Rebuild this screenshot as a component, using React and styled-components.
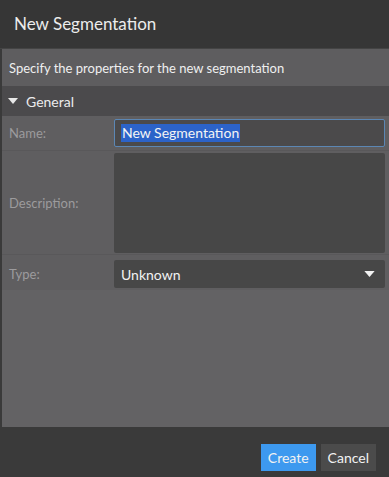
import React from 'react'
import styled, { createGlobalStyle } from 'styled-components'

const GlobalStyle = createGlobalStyle`
html, body {
margin: 0;
padding: 0;
background: #373737;
}
body {
font-family: Lato, "Open Sans", sans-serif;
}
`

function App() {
    return (
        <Dialog>
            <GlobalStyle />
            <Header>New Segmentation</Header>
            <Body>
                <Subtitle>Specify the properties for the new segmentation</Subtitle>
                <Section>
                    <Caret viewBox="0 0 10 6">
                        <path d="M0 0 L10 0 L5 6 Z" fill="#e8e8e8" />
                    </Caret>
                    General
                </Section>
                <Row height={35}>
                    <Label>Name:</Label>
                    <NameInput>
                        <Selected>New Segmentation</Selected>
                    </NameInput>
                </Row>
                <Row height={104}>
                    <Label>Description:</Label>
                    <TextArea />
                </Row>
                <Row height={35} last>
                    <Label>Type:</Label>
                    <Select>
                        Unknown
                        <SelectCaret viewBox="0 0 12 7">
                            <path d="M0 0 L12 0 L6 7 Z" fill="#f2f2f2" />
                        </SelectCaret>
                    </Select>
                </Row>
                <Filler />
            </Body>
            <Footer>
                <Button primary>Create</Button>
                <Button>Cancel</Button>
            </Footer>
        </Dialog>
    )
}

export default App

const Dialog = styled.div`
width: 389px;
height: 477px;
display: flex;
flex-direction: column;
background: #373737;
overflow: hidden;
`

const Header = styled.div`
height: 49px;
flex-shrink: 0;
display: flex;
align-items: center;
padding-left: 14px;
padding-bottom: 1px;
box-sizing: border-box;
font-size: 17px;
color: #ececec;
background: #363636;
border-bottom: 1px solid #444;
`

const Body = styled.div`
flex: 1;
display: flex;
flex-direction: column;
background: #636264;
border-left: 2px solid #3a3a3a;
`

const Subtitle = styled.div`
height: 37px;
flex-shrink: 0;
display: flex;
align-items: center;
padding-left: 7px;
font-size: 13px;
color: #efefef;
background: #5e5d5f;
`

const Section = styled.div`
height: 30px;
flex-shrink: 0;
display: flex;
align-items: center;
padding-left: 6px;
gap: 8px;
font-size: 14px;
color: #ececec;
background: #4b4a4c;
`

const Caret = styled.svg`
width: 10px;
height: 6px;
`

const Row = styled.div`
height: ${p => p.height}px;
flex-shrink: 0;
display: flex;
align-items: ${p => p.last ? 'flex-start' : 'center'};
padding: ${p => p.last ? '5px 4px 0 0' : '0 4px 0 0'};
box-sizing: border-box;
background: #5f5e60;
border-bottom: ${p => p.last ? 'none' : '1px solid #59585a'};
`

const Label = styled.div`
width: 112px;
padding-left: 7px;
box-sizing: border-box;
font-size: 13px;
line-height: 28px;
color: #9c9b9d;
`

const NameInput = styled.div`
flex: 1;
height: 28px;
display: flex;
align-items: center;
padding-left: 6px;
box-sizing: border-box;
background: #4b4a4b;
border: 1px solid #5c87b4;
border-radius: 2px;
`

const Selected = styled.span`
font-size: 14px;
line-height: 18px;
color: #f4f4f4;
background: #2c63c9;
padding: 0 1px;
`

const TextArea = styled.div`
flex: 1;
height: 100px;
background: #474747;
border-radius: 2px;
`

const Select = styled.div`
flex: 1;
height: 28px;
display: flex;
align-items: center;
justify-content: space-between;
padding: 0 10px 0 7px;
box-sizing: border-box;
font-size: 14px;
color: #f2f2f2;
background: #474747;
border-radius: 2px;
`

const SelectCaret = styled.svg`
width: 11px;
height: 6px;
`

const Filler = styled.div`
flex: 1;
background: #636264;
`

const Footer = styled.div`
height: 50px;
flex-shrink: 0;
display: flex;
align-items: center;
justify-content: flex-end;
gap: 5px;
padding: 10px 13px 0 0;
box-sizing: border-box;
background: #3a3a3a;
`

const Button = styled.div`
height: 27px;
padding: 0 7px;
display: flex;
align-items: center;
font-size: 14px;
color: #f2f2f2;
background: ${p => p.primary ? '#3d99ef' : '#4b4b4b'};
`
